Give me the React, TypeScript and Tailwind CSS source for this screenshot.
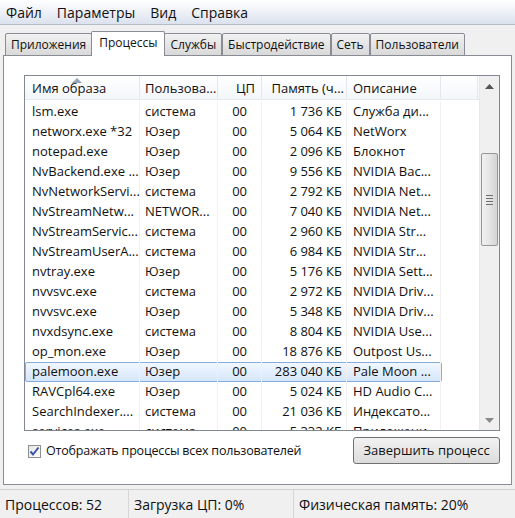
const rows = [
  ['lsm.exe', 'система', '00', '1 736 КБ', 'Служба ди...'],
  ['networx.exe *32', 'Юзер', '00', '5 064 КБ', 'NetWorx'],
  ['notepad.exe', 'Юзер', '00', '2 096 КБ', 'Блокнот'],
  ['NvBackend.exe ...', 'Юзер', '00', '9 556 КБ', 'NVIDIA Bac...'],
  ['NvNetworkServi...', 'система', '00', '2 792 КБ', 'NVIDIA Net...'],
  ['NvStreamNetw...', 'NETWOR...', '00', '7 040 КБ', 'NVIDIA Net...'],
  ['NvStreamServic...', 'система', '00', '2 960 КБ', 'NVIDIA Str...'],
  ['NvStreamUserA...', 'система', '00', '6 984 КБ', 'NVIDIA Str...'],
  ['nvtray.exe', 'Юзер', '00', '5 176 КБ', 'NVIDIA Sett...'],
  ['nvvsvc.exe', 'система', '00', '2 972 КБ', 'NVIDIA Driv...'],
  ['nvvsvc.exe', 'Юзер', '00', '5 348 КБ', 'NVIDIA Driv...'],
  ['nvxdsync.exe', 'система', '00', '8 804 КБ', 'NVIDIA Use...'],
  ['op_mon.exe', 'Юзер', '00', '18 876 КБ', 'Outpost Us...'],
  ['palemoon.exe', 'Юзер', '00', '283 040 КБ', 'Pale Moon ...'],
  ['RAVCpl64.exe', 'Юзер', '00', '5 024 КБ', 'HD Audio C...'],
  ['SearchIndexer....', 'система', '00', '21 036 КБ', 'Индексато...'],
  ['services.exe', 'система', '00', '5 332 КБ', 'Приложени...'],
];

const tabs = ['Приложения', 'Процессы', 'Службы', 'Быстродействие', 'Сеть', 'Пользователи'];

const cols = 'grid grid-cols-[115px_78px_44px_85px_94px_37px]';

export default function App() {
  return (
    <div
      className="w-[515px] h-[518px] bg-[#f0f0f0] flex flex-col text-[13px] text-[#111] overflow-hidden"
      style={{ fontFamily: '"Open Sans", "Noto Sans", sans-serif' }}
    >
      {/* menu */}
      <div className="h-[25px] flex items-center gap-[15px] px-[6px] bg-gradient-to-b from-white to-[#dbe2ee] border-b border-[#b6bcc6] text-[14px]">
        <span>Файл</span>
        <span>Параметры</span>
        <span>Вид</span>
        <span>Справка</span>
      </div>

      {/* tabs */}
      <div className="flex items-end pl-[5px] mt-[6px] h-[25px] relative z-10 text-[12px]">
        {tabs.map((t, i) =>
          i === 1 ? (
            <div
              key={t}
              className="h-[25px] px-[7px] -ml-[1px] -mr-[1px] bg-white border border-b-0 border-[#898c95] rounded-t-[2px] flex items-start pt-[2px]"
            >
              {t}
            </div>
          ) : (
            <div
              key={t}
              className="h-[23px] px-[5px] bg-gradient-to-b from-[#f2f2f2] to-[#d9d9d9] border border-[#898c95] rounded-t-[2px] flex items-center"
            >
              {t}
            </div>
          )
        )}
      </div>

      {/* panel */}
      <div className="mx-[3px] -mt-[1px] h-[430px] bg-white border border-[#898c95] flex flex-col pl-[20px] pr-[11px] pt-[19px]">
        <div className="h-[356px] border border-[#828790] flex overflow-hidden">
          <div className="flex-1 flex flex-col">
            {/* header */}
            <div className={`${cols} h-[24px] bg-gradient-to-b from-white to-[#f3f6fa] border-b border-[#e5e8ee] relative`}>
              <div className="pl-[7px] pt-[2px] flex items-center border-r border-[#e3e8ef] relative">
                Имя образа
                <svg className="absolute left-[47px] top-[2px]" width="10" height="5" viewBox="0 0 10 5">
                  <path d="M0 5 L5 0 L10 5 Z" fill="#97a5b9" />
                </svg>
              </div>
              <div className="pl-[5px] pt-[2px] flex items-center border-r border-[#e3e8ef]">Пользова...</div>
              <div className="pr-[6px] pt-[2px] flex items-center justify-end border-r border-[#e3e8ef]">ЦП</div>
              <div className="pr-[2px] pt-[2px] flex items-center justify-end border-r border-[#e3e8ef]">Память (ч...</div>
              <div className="pl-[6px] pt-[2px] flex items-center border-r border-[#e3e8ef]">Описание</div>
              <div className="border-r border-[#e3e8ef]" />
            </div>
            {/* rows */}
            <div className="flex-1 overflow-hidden pt-[2px]">
              {rows.map((r, i) => (
                <div
                  key={i}
                  className={`${cols} h-[20px] items-center whitespace-nowrap ${
                    r[0] === 'palemoon.exe' ? 'relative' : ''
                  }`}
                >
                  {r[0] === 'palemoon.exe' && (
                    <div className="absolute left-0 top-0 w-[417px] h-[20px] rounded-[2px] border border-[#84acdd] bg-gradient-to-b from-[#f1f7fe] to-[#d5e6fc]" />
                  )}
                  <div className="relative pl-[7px] overflow-hidden border-r border-[#f1f1f1] h-full flex items-center">{r[0]}</div>
                  <div className="relative pl-[5px] overflow-hidden border-r border-[#f1f1f1] h-full flex items-center">{r[1]}</div>
                  <div className="relative pr-[14px] text-right border-r border-[#f1f1f1] h-full flex items-center justify-end">{r[2]}</div>
                  <div className="relative pr-[4px] text-right border-r border-[#f1f1f1] h-full flex items-center justify-end">{r[3]}</div>
                  <div className="relative pl-[6px] overflow-hidden border-r border-[#f1f1f1] h-full flex items-center">{r[4]}</div>
                  <div className="h-full" />
                </div>
              ))}
            </div>
          </div>
          {/* scrollbar */}
          <div className="w-[20px] bg-[#f0f0f0] border-l border-[#e8e8e8] flex flex-col items-center">
            <div className="h-[20px] flex items-center justify-center">
              <svg width="9" height="5" viewBox="0 0 9 5">
                <path d="M0 5 L4.5 0 L9 5 Z" fill="#555" />
              </svg>
            </div>
            <div className="h-[57px]" />
            <div className="w-[17px] h-[93px] rounded-[2px] border border-[#979797] bg-gradient-to-r from-[#f1f1f1] via-[#e5e5e5] to-[#d4d4d4] flex flex-col items-center justify-center gap-[2px]">
              <div className="w-[7px] h-px bg-[#707070]" />
              <div className="w-[7px] h-px bg-[#707070]" />
              <div className="w-[7px] h-px bg-[#707070]" />
              <div className="w-[7px] h-px bg-[#707070]" />
            </div>
            <div className="flex-1" />
            <div className="h-[20px] flex items-center justify-center">
              <svg width="9" height="5" viewBox="0 0 9 5">
                <path d="M0 0 L4.5 5 L9 0 Z" fill="#8a8a8a" />
              </svg>
            </div>
          </div>
        </div>

        {/* bottom controls */}
        <div className="flex items-start justify-between mt-[6px]">
          <label className="flex items-center gap-[5px] mt-[5px] ml-[4px] text-[12.5px] tracking-[-0.2px]">
            <span className="w-[13px] h-[13px] border border-[#8e8f8f] bg-gradient-to-br from-[#e6e6e6] to-white flex items-center justify-center">
              <svg width="11" height="11" viewBox="0 0 11 11">
                <path d="M1.5 5.5 L4 8.5 L9.5 1.5" stroke="#3a56a8" strokeWidth="2" fill="none" />
              </svg>
            </span>
            <span>Отображать процессы всех пользователей</span>
          </label>
          <button className="w-[147px] h-[27px] rounded-[3px] border border-[#707070] bg-gradient-to-b from-[#f2f2f2] to-[#dcdcdc] text-[13px] text-[#111]">
            Завершить процесс
          </button>
        </div>
      </div>

      {/* status bar */}
      <div className="mt-[4px] flex-1 border-t border-[#d0d0d0] flex text-[14px]">
        <div className="w-[129px] border-r border-[#d7d7d7] pl-[5px] flex items-center">Процессов: 52</div>
        <div className="w-[165px] border-r border-[#d7d7d7] pl-[5px] flex items-center">Загрузка ЦП: 0%</div>
        <div className="flex-1 pl-[5px] flex items-center">Физическая память: 20%</div>
      </div>
    </div>
  );
}
